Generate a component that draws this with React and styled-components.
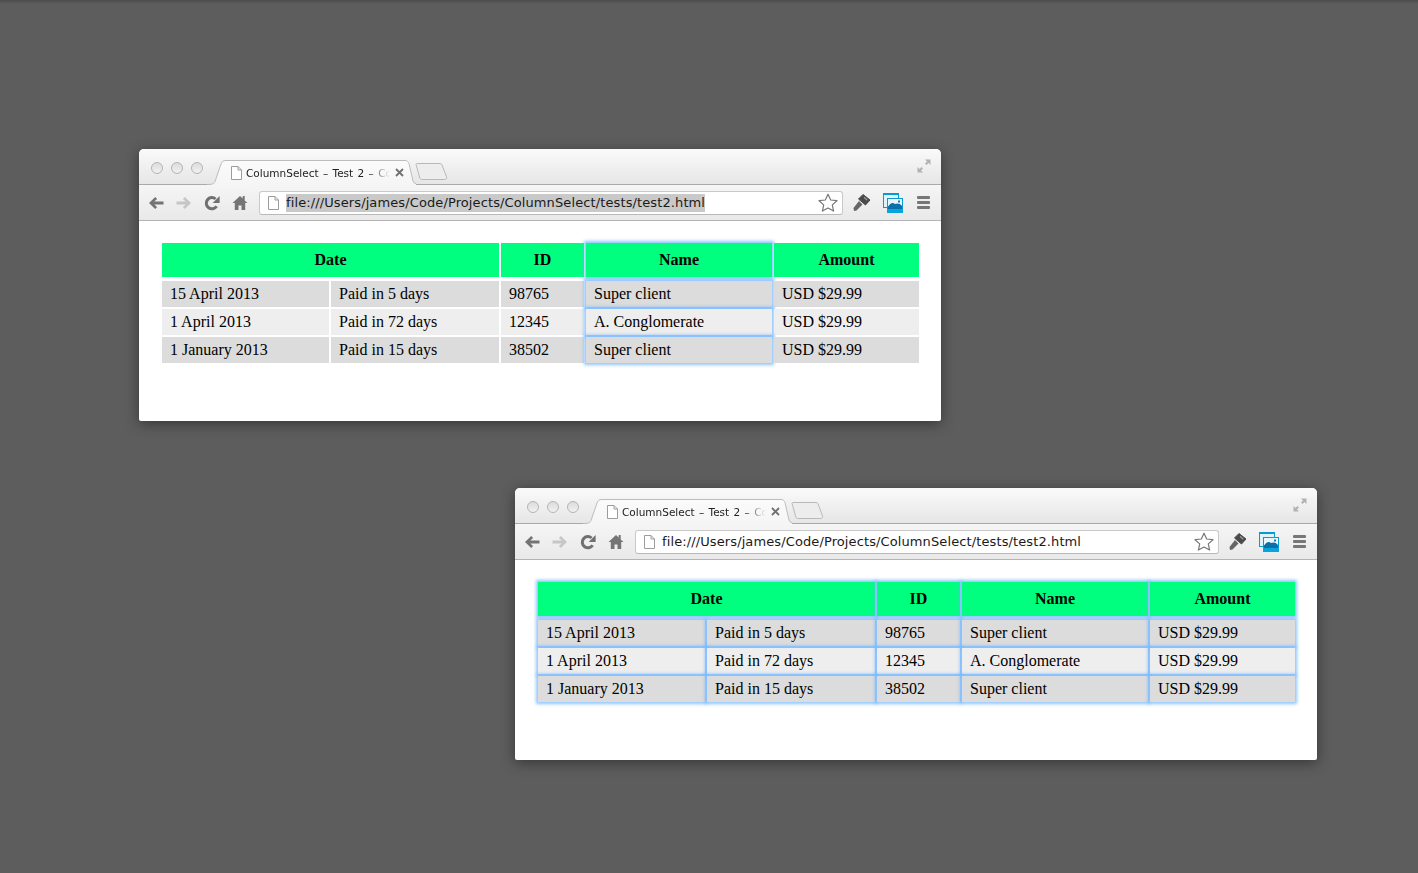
import styled, { createGlobalStyle } from "styled-components";

const GlobalStyle = createGlobalStyle`
  html, body {
    margin: 0;
    padding: 0;
    height: 100%;
    overflow: hidden;
  }
  body {
    background: linear-gradient(#4c4c4c 0, #5d5d5d 4px);
    font-family: "Liberation Serif", serif;
  }
`;

const URL = "file:///Users/james/Code/Projects/ColumnSelect/tests/test2.html";

const HEADERS = [
  { label: "Date", span: 2, cols: [0, 1] },
  { label: "ID", span: 1, cols: [2] },
  { label: "Name", span: 1, cols: [3] },
  { label: "Amount", span: 1, cols: [4] },
];

const ROWS = [
  ["15 April 2013", "Paid in 5 days", "98765", "Super client", "USD $29.99"],
  ["1 April 2013", "Paid in 72 days", "12345", "A. Conglomerate", "USD $29.99"],
  ["1 January 2013", "Paid in 15 days", "38502", "Super client", "USD $29.99"],
];

const GLOW = "0 0 3px 2px rgba(112, 182, 255, 0.78)";

const Desktop = styled.div`
  position: relative;
  width: 1418px;
  height: 873px;
`;

const Window = styled.div`
  position: absolute;
  left: ${(p) => p.$left}px;
  top: ${(p) => p.$top}px;
  width: 802px;
  height: 272px;
  display: flex;
  flex-direction: column;
  background: #fff;
  border-radius: 5px 5px 2px 2px;
  box-shadow: 0 3px 14px rgba(0, 0, 0, 0.42);
  overflow: hidden;
`;

const TitleBar = styled.div`
  height: 35px;
  flex: none;
  display: flex;
  align-items: flex-end;
  padding: 0 10px 0 12px;
  background: linear-gradient(#fafafa, #e6e6e6);
  border-bottom: 1px solid #a9a9a9;
`;

const Lights = styled.div`
  display: flex;
  gap: 8px;
  align-self: flex-start;
  margin-top: 13px;
`;

const Light = styled.span`
  width: 12px;
  height: 12px;
  box-sizing: border-box;
  border-radius: 50%;
  border: 1px solid #b4b4b4;
  background: linear-gradient(#dcdcdc, #f1f1f1);
`;

const Tab = styled.div`
  position: relative;
  height: 25px;
  width: 209px;
  box-sizing: border-box;
  margin: 0 0 -1px 4px;
  padding: 0 0 0 24px;
  display: flex;
  align-items: center;
  flex: none;
`;

const TabShape = styled.svg`
  position: absolute;
  left: 0;
  top: 0;
`;

const TabContent = styled.div`
  position: relative;
  display: flex;
  align-items: center;
`;

const TabTitle = styled.span`
  width: 144px;
  margin-left: 4px;
  flex: none;
  white-space: nowrap;
  font: 10.5px "DejaVu Sans", sans-serif;
  word-spacing: 1px;
  color: #222;
  -webkit-mask-image: linear-gradient(to right, #000 122px, transparent 144px);
  mask-image: linear-gradient(to right, #000 122px, transparent 144px);
`;

const TabClose = styled.svg`
  flex: none;
  margin-left: 5px;
`;

const NewTab = styled.svg`
  flex: none;
  margin-bottom: 3px;
  margin-left: -1px;
`;

const Expand = styled.svg`
  flex: none;
  margin-left: auto;
  align-self: flex-start;
  margin-top: 10px;
`;

const Toolbar = styled.div`
  height: 35px;
  flex: none;
  display: flex;
  align-items: center;
  padding: 0 11px 0 3px;
  background: linear-gradient(#f5f5f5, #e9e9e9);
  border-bottom: 1px solid #b4b4b4;
`;

const NavButton = styled.div`
  width: 28px;
  height: 28px;
  flex: none;
  display: flex;
  align-items: center;
  justify-content: center;
`;

const AddressBar = styled.div`
  height: 24px;
  width: 584px;
  box-sizing: border-box;
  margin-left: 5px;
  flex: none;
  display: flex;
  align-items: center;
  padding: 0 4px 0 8px;
  background: #fff;
  border: 1px solid #c9c9c9;
  border-bottom-color: #b9b9b9;
  border-radius: 3px;
`;

const UrlText = styled.span`
  margin-left: 7px;
  padding: 1px 0;
  font: 13px "DejaVu Sans", sans-serif;
  line-height: 16px;
  letter-spacing: 0.11px;
  color: #1a1a1a;
  white-space: nowrap;
  background: ${(p) => (p.$selected ? "#c9c9c9" : "transparent")};
`;

const Star = styled.svg`
  margin-left: auto;
  flex: none;
`;

const ToolIcons = styled.div`
  display: flex;
  align-items: center;
  margin-left: 10px;
  gap: 12px;
`;

const Menu = styled.div`
  width: 13px;
  margin-left: 2px;
  display: flex;
  flex-direction: column;
  gap: 2px;
`;

const MenuBar = styled.span`
  height: 3px;
  background: #777;
  border-radius: 1px;
`;

const Page = styled.div`
  flex: 1;
  padding: 22px 0 0 23px;
`;

const Table = styled.div`
  display: grid;
  grid-template-columns: 167px 168px 83px 186px 145px;
  grid-template-rows: 36px repeat(3, 26px);
  gap: 2px;
  font-size: 16px;
  color: #000;
`;

const Th = styled.div`
  grid-column: span ${(p) => p.$span};
  height: 34px;
  display: flex;
  align-items: center;
  justify-content: center;
  background: #00ff7f;
  font-weight: bold;
  box-shadow: ${(p) => (p.$selected ? GLOW : "none")};
`;

const Td = styled.div`
  display: flex;
  align-items: center;
  padding-left: 8px;
  background: ${(p) => (p.$odd ? "#dcdcdc" : "#eeeeee")};
  box-shadow: ${(p) => (p.$selected ? GLOW : "none")};
`;

const BackIcon = ({ color }) => (
  <svg width="16" height="14" viewBox="0 0 16 14">
    <path d="M7.2 1 1 7l6.2 6 1.900-1.900-2.800-2.600H15.500v-3H6.300l2.800-2.600z" fill={color} />
  </svg>
);

const ForwardIcon = ({ color }) => (
  <svg width="16" height="14" viewBox="0 0 16 14">
    <path d="M8.800 1 15 7l-6.200 6-1.900-1.900 2.800-2.600H.5v-3h9.200L6.900 2.900z" fill={color} />
  </svg>
);

const ReloadIcon = () => (
  <svg width="16" height="16" viewBox="0 0 16 16">
    <path d="M12.600 11.200A5.600 5.600 0 1 1 11.600 4" fill="none" stroke="#707070" strokeWidth="3" />
    <path d="M15.600 1v7h-7z" fill="#707070" />
  </svg>
);

const HomeIcon = () => (
  <svg width="16" height="15" viewBox="0 0 16 15">
    <path d="M8 1 .5 8h2.300v7h3.700v-4.500h3V15h3.700V8h2.300l-2.800-2.600V1h-2v2.500z" fill="#757575" />
  </svg>
);

const PageIcon = () => (
  <svg width="11" height="14" viewBox="0 0 11 14">
    <path d="M.5.5h6.500l3.500 3.500v9.500H.5z" fill="#fff" stroke="#9c9c9c" />
    <path d="M7 .5V4h3.500" fill="none" stroke="#9c9c9c" />
  </svg>
);

const StarIcon = () => (
  <Star width="20" height="19" viewBox="0 0 20 19">
    <path
      d="M10 1.200l2.700 5.800 6.300.7-4.700 4.200 1.300 6.200L10 15l-5.600 3.100 1.300-6.200L1 7.700l6.300-.7z"
      fill="#fff"
      stroke="#777"
      strokeWidth="1.200"
      strokeLinejoin="round"
    />
  </Star>
);

const WrenchIcon = () => (
  <svg width="18" height="19" viewBox="0 0 18 19">
    <path d="M6 8 9.500 11.500 3.500 17.500 1 18 .5 15z" fill="#666" />
    <path d="M5.500 6 10 1.500 17 7 12.500 12z" fill="#4a4a4a" stroke="#4a4a4a" strokeLinejoin="round" />
    <path d="M11 4.300l3.200 2.900" stroke="#9a9a9a" strokeWidth="1.200" />
  </svg>
);

const ExtensionIcon = () => (
  <svg width="20" height="20" viewBox="0 0 20 20">
    <rect x="0.5" y="0.5" width="15" height="14" fill="#dff3fb" stroke="#0a9ad2" />
    <rect x="0" y="0" width="16" height="2" fill="#0a9ad2" />
    <rect x="4" y="5" width="16" height="15" fill="#0a9ad2" />
    <rect x="5" y="6" width="14" height="7" fill="#e8f5fb" />
    <path d="M5 14c2-4 5-5 7-3 2-1 5-1 7 2v3H5z" fill="#0b6fa8" />
    <rect x="15" y="7.500" width="2" height="2" fill="#0a7fb8" />
    <rect x="4" y="16" width="16" height="4" fill="#08a5dd" />
  </svg>
);

const BrowserWindow = ({ left, top, selectedCols, urlSelected }) => (
  <Window $left={left} $top={top}>
    <TitleBar>
      <Lights>
        <Light />
        <Light />
        <Light />
      </Lights>
      <Tab>
        <TabShape width="209" height="25" viewBox="0 0 209 25">
          <defs>
            <linearGradient id={`tab-${left}`} x1="0" y1="0" x2="0" y2="1">
              <stop offset="0" stopColor="#fbfbfb" />
              <stop offset="1" stopColor="#f5f5f5" />
            </linearGradient>
          </defs>
          <path
            d="M0 24.500c5 0 7-.5 8-3L14 4C15 1.500 16 .5 19 .5H198c2 0 3 1 4 3l4 17.500c.6 1.500 1.500 2.500 3 2.500V25H0z"
            fill={`url(#tab-${left})`}
          />
          <path
            d="M0 24.500c5 0 7-.5 8-3L14 4C15 1.500 16 .5 19 .5H198c2 0 3 1 4 3l4 17.500c.6 1.500 1.500 2.500 3 2.500"
            fill="none"
            stroke="#bcbcbc"
          />
        </TabShape>
        <TabContent>
          <PageIcon />
          <TabTitle>ColumnSelect – Test 2 – Co</TabTitle>
          <TabClose width="9" height="9" viewBox="0 0 9 9">
            <path d="M1 1l7 7M8 1 1 8" stroke="#707070" strokeWidth="1.800" />
          </TabClose>
        </TabContent>
      </Tab>
      <NewTab width="33" height="18" viewBox="0 0 33 18">
        <path
          d="M1 1.500c0-.5.5-1 1-1h23c1 0 1.700.5 2 1.300l4.500 12c.5 1.500-.2 2.700-1.800 2.700H7c-1 0-1.800-.5-2.200-1.500z"
          fill="#ededed"
          stroke="#b9b9b9"
        />
      </NewTab>
      <Expand width="14" height="14" viewBox="0 0 14 14">
        <path d="M8 .5h5.500V6L11.500 4 9.500 6 8 4.500l2-2zM6 13.500H.5V8l2 2 2-2L6 9.500l-2 2z" fill="#b2b2b2" />
      </Expand>
    </TitleBar>
    <Toolbar>
      <NavButton>
        <BackIcon color="#737373" />
      </NavButton>
      <NavButton>
        <ForwardIcon color="#c6c6c6" />
      </NavButton>
      <NavButton>
        <ReloadIcon />
      </NavButton>
      <NavButton>
        <HomeIcon />
      </NavButton>
      <AddressBar>
        <PageIcon />
        <UrlText $selected={urlSelected}>{URL}</UrlText>
        <StarIcon />
      </AddressBar>
      <ToolIcons>
        <WrenchIcon />
        <ExtensionIcon />
        <Menu>
          <MenuBar />
          <MenuBar />
          <MenuBar />
        </Menu>
      </ToolIcons>
    </Toolbar>
    <Page>
      <Table>
        {HEADERS.map((h) => (
          <Th key={h.label} $span={h.span} $selected={h.cols.some((c) => selectedCols.includes(c))}>
            {h.label}
          </Th>
        ))}
        {ROWS.map((row, r) =>
          row.map((cell, c) => (
            <Td key={`${r}-${c}`} $odd={r % 2 === 0} $selected={selectedCols.includes(c)}>
              {cell}
            </Td>
          ))
        )}
      </Table>
    </Page>
  </Window>
);

export default function App() {
  return (
    <Desktop>
      <GlobalStyle />
      <BrowserWindow left={139} top={149} selectedCols={[3]} urlSelected />
      <BrowserWindow left={515} top={488} selectedCols={[0, 1, 2, 3, 4]} />
    </Desktop>
  );
}
